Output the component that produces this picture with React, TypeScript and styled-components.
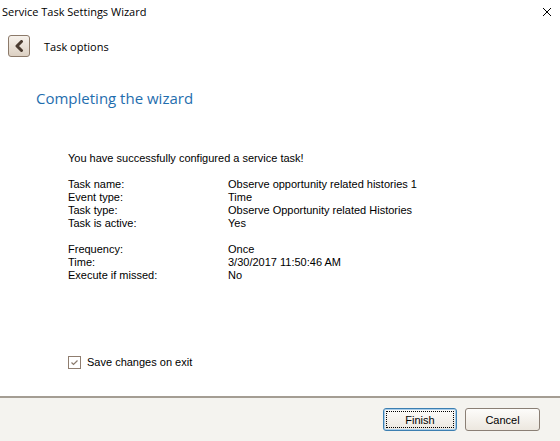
import React from 'react';
import styled, { createGlobalStyle } from 'styled-components';

const GlobalStyle = createGlobalStyle`
  html, body {
    margin: 0;
    padding: 0;
    background: #ffffff;
  }
`;

const Window = styled.div`
  width: 560px;
  height: 441px;
  display: flex;
  flex-direction: column;
  background: #ffffff;
  overflow: hidden;
`;

const TitleBar = styled.div`
  height: 23px;
  display: flex;
  align-items: center;
  justify-content: space-between;
  padding: 0 6px 0 2px;
  font-family: 'Open Sans', 'Noto Sans', sans-serif;
  font-size: 11px;
  color: #000000;
`;

const CloseIcon = styled.svg`
  width: 10px;
  height: 10px;
  margin-right: 2px;
`;

const Header = styled.div`
  display: flex;
  align-items: center;
  gap: 14px;
  padding: 12px 0 0 8px;
  font-family: 'Open Sans', 'Noto Sans', sans-serif;
  font-size: 11px;
`;

const BackButton = styled.div`
  width: 22px;
  height: 22px;
  box-sizing: border-box;
  border: 1px solid #8c7a6a;
  border-radius: 3px;
  background: linear-gradient(#f7f2ec, #dcd0c2);
  display: flex;
  align-items: center;
  justify-content: center;
`;

const Body = styled.div`
  flex: 1;
  display: flex;
  flex-direction: column;
  padding: 0 0 0 36px;
`;

const Heading = styled.div`
  margin-top: 31px;
  font-family: 'Open Sans', 'Noto Sans', sans-serif;
  font-size: 15px;
  color: #1f6eae;
`;

const Content = styled.div`
  margin-top: 44px;
  padding-left: 32px;
  font-family: 'Liberation Sans', Arial, sans-serif;
  font-size: 11px;
  line-height: 13px;
  color: #000000;
  display: flex;
  flex-direction: column;
`;

const Summary = styled.div`
  margin-bottom: 13px;
`;

const InfoGrid = styled.div<{ $gap?: number }>`
  display: grid;
  grid-template-columns: 160px 1fr;
  margin-bottom: ${(p) => p.$gap ?? 0}px;
`;

const CheckRow = styled.label`
  margin-top: 74px;
  display: flex;
  align-items: center;
  gap: 6px;
  font-family: 'Liberation Sans', Arial, sans-serif;
  font-size: 11px;
`;

const CheckBox = styled.span`
  width: 13px;
  height: 13px;
  box-sizing: border-box;
  border: 1px solid #8f7d6f;
  background: #ffffff;
  display: flex;
  align-items: center;
  justify-content: center;
`;

const Footer = styled.div`
  height: 43px;
  border-top: 2px solid #a49d93;
  background: #f4f3ef;
  display: flex;
  align-items: center;
  justify-content: flex-end;
  gap: 8px;
  padding-right: 20px;
`;

const Button = styled.button<{ $default?: boolean }>`
  width: ${(p) => (p.$default ? 74 : 75)}px;
  height: 23px;
  box-sizing: border-box;
  border: 1px solid ${(p) => (p.$default ? '#3c7fb1' : '#8a7f75')};
  border-radius: 3px;
  background: linear-gradient(#fdfcfa, #ece7df);
  font-family: 'Liberation Sans', Arial, sans-serif;
  font-size: 11px;
  color: #000000;
  padding: 0;
  box-shadow: ${(p) => (p.$default ? 'inset 0 0 0 1px #a9cdea' : 'none')};
  outline: ${(p) => (p.$default ? '1px dotted #000000' : 'none')};
  outline-offset: -4px;
`;

const rows1 = [
  ['Task name:', 'Observe opportunity related histories 1'],
  ['Event type:', 'Time'],
  ['Task type:', 'Observe Opportunity related Histories'],
  ['Task is active:', 'Yes'],
];

const rows2 = [
  ['Frequency:', 'Once'],
  ['Time:', '3/30/2017 11:50:46 AM'],
  ['Execute if missed:', 'No'],
];

const App: React.FC = () => (
  <Window>
    <GlobalStyle />
    <TitleBar>
      <span>Service Task Settings Wizard</span>
      <CloseIcon viewBox="0 0 10 10">
        <path d="M1 1 L9 9 M9 1 L1 9" stroke="#000" strokeWidth="1" />
      </CloseIcon>
    </TitleBar>
    <Header>
      <BackButton>
        <svg width="10" height="12" viewBox="0 0 10 12">
          <path d="M7.5 1.5 L3 6 L7.5 10.5" fill="none" stroke="#4a3b30" strokeWidth="3" strokeLinejoin="round" strokeLinecap="round" />
        </svg>
      </BackButton>
      <span>Task options</span>
    </Header>
    <Body>
      <Heading>Completing the wizard</Heading>
      <Content>
        <Summary>You have successfully configured a service task!</Summary>
        <InfoGrid $gap={13}>
          {rows1.map(([k, v]) => (
            <React.Fragment key={k}>
              <span>{k}</span>
              <span>{v}</span>
            </React.Fragment>
          ))}
        </InfoGrid>
        <InfoGrid>
          {rows2.map(([k, v]) => (
            <React.Fragment key={k}>
              <span>{k}</span>
              <span>{v}</span>
            </React.Fragment>
          ))}
        </InfoGrid>
        <CheckRow>
          <CheckBox>
            <svg width="9" height="9" viewBox="0 0 9 9">
              <path d="M1.5 4.5 L3.5 6.5 L7.5 2.5" fill="none" stroke="#8a7a6c" strokeWidth="1.2" />
            </svg>
          </CheckBox>
          <span>Save changes on exit</span>
        </CheckRow>
      </Content>
    </Body>
    <Footer>
      <Button $default>Finish</Button>
      <Button>Cancel</Button>
    </Footer>
  </Window>
);

export default App;
